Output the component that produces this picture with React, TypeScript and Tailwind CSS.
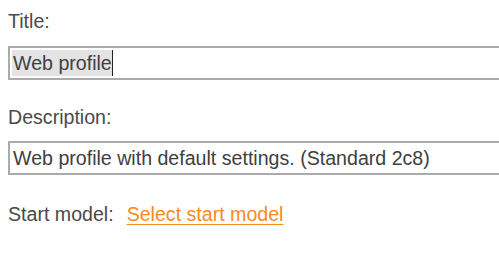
export default function App() {
  return (
    <div
      className="w-[499px] h-[273px] overflow-hidden bg-white pl-2 pt-[10px] text-[19.6px] leading-[22px] text-[#4a4a4a]"
      style={{ fontFamily: '"Liberation Sans", Arial, sans-serif' }}
    >
      <div>Title:</div>
      <div className="mt-[14px] flex h-[34px] w-[560px] border-2 border-[#ababab] p-[2px] text-[#404040]">
        <span className="flex items-center bg-[#e3e3e3] pl-px">Web profile</span>
        <span className="w-px bg-[#222]" />
      </div>

      <div className="mt-[26px]">Description:</div>
      <div className="mt-[13px] flex h-[34px] w-[560px] items-center border-2 border-[#ababab] px-[3px] text-[#404040]">
        Web profile with default settings. (Standard 2c8)
      </div>

      <div className="mt-[28px] flex">
        <span>Start model:</span>
        <a href="#" className="ml-[13px] text-[#f68b1f] underline underline-offset-[3px]">
          Select start model
        </a>
      </div>
    </div>
  );
}
